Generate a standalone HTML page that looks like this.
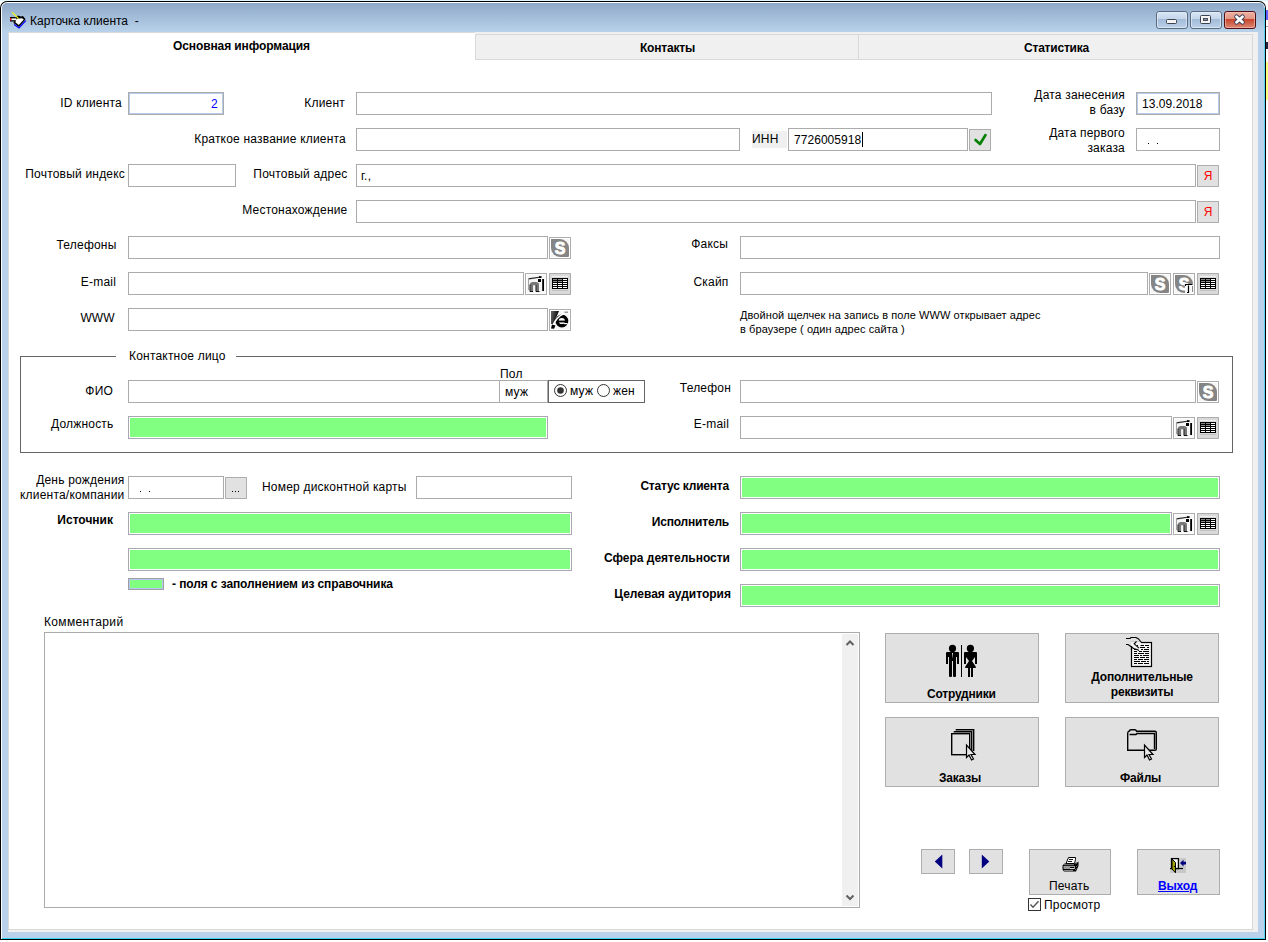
<!DOCTYPE html>
<html><head><meta charset="utf-8">
<style>
*{box-sizing:border-box}
html,body{margin:0;padding:0;width:1268px;height:942px;overflow:hidden;background:#fff;font-family:"Liberation Sans",sans-serif;font-size:12px;color:#000}
.a{position:absolute}
.t{position:absolute;white-space:nowrap;line-height:14px;font-size:12px;letter-spacing:0.2px}
.r{text-align:right}
.b{font-weight:bold;letter-spacing:-0.2px}
.in{position:absolute;border:1px solid #ababab;background:#fff;height:23px}
.gr{position:absolute;border:1px solid #a8a8b0;background:#80ff80;height:23px;box-shadow:inset 0 0 0 1px #fff}
.sb{position:absolute;border:1px solid #adadad;background:#e1e1e1;width:22px;height:22px}
.bb{position:absolute;border:1px solid #adadad;background:#e1e1e1}
</style></head><body>

<svg width="0" height="0" style="position:absolute">
<defs>
 <symbol id="bx" viewBox="0 0 22 22"><rect x="0.5" y="0.5" width="21" height="21" fill="#e1e1e1" stroke="#adadad"/></symbol>
 <symbol id="bxl" viewBox="0 0 22 22"><rect x="0.5" y="0.5" width="21" height="21" fill="#f6f6f6" stroke="#adadad"/><rect x="1.5" y="1.5" width="19" height="19" fill="none" stroke="#fff"/></symbol>
 <symbol id="sk" viewBox="0 0 22 22"><use href="#bxl"/>
  <path d="M2,2 H11 A9,9 0 0 1 20,11 V18.8 Q20,20 18.8,20 H11 A9,9 0 0 1 2,11 Z" fill="#858585"/>
  <text x="11" y="16.6" font-family="Liberation Sans" font-size="16" font-weight="bold" fill="#fff" stroke="#fff" stroke-width="0.9" text-anchor="middle">S</text>
 </symbol>
 <symbol id="sk2" viewBox="0 0 22 22"><use href="#bxl"/>
  <path d="M2,2 H11 A9,9 0 0 1 20,11 V18.8 Q20,20 18.8,20 H11 A9,9 0 0 1 2,11 Z" fill="#858585"/>
  <text x="11" y="16.6" font-family="Liberation Sans" font-size="16" font-weight="bold" fill="#fff" stroke="#fff" stroke-width="0.9" text-anchor="middle">S</text>
  <rect x="12" y="11" width="9" height="10" fill="#fafafa"/>
  <rect x="19" y="13" width="1" height="6" fill="#888"/>
  <path d="M12.5,13 V11.5 H19.5 M15.5,12.5 V19.5 H14" fill="none" stroke="#000" stroke-width="1.2"/>
 </symbol>
 <symbol id="ml" viewBox="0 0 22 22"><use href="#bxl"/>
  <path d="M3.5,5.8 L16,4" stroke="#222" stroke-width="1.2"/><rect x="14" y="3.2" width="2.5" height="1.8" fill="#000"/>
  <path d="M3.5,5.5 V17" stroke="#999" stroke-width="0.9"/>
  <rect x="13" y="6" width="3" height="3" fill="#000"/>
  <rect x="17.2" y="6" width="1.8" height="12" fill="#000"/>
  <path d="M6.5,18.6 V11.8 Q6.5,10.6 8,10.6 H11 Q12.4,10.6 12.4,11.8 V18.6" fill="none" stroke="#777" stroke-width="3.2"/>
  <path d="M5,11.5 V18.5 M11,12 V18.5" stroke="#222" stroke-width="1"/>
  <path d="M5,18.5 H8 M11,18.5 H14.5" stroke="#111" stroke-width="1.2"/>
 </symbol>
 <symbol id="gd" viewBox="0 0 22 22"><rect x="0.5" y="0.5" width="21" height="21" fill="#d9d9d9" stroke="#adadad"/>
  <rect x="3" y="3" width="16" height="1" fill="#efefef"/><rect x="3" y="17" width="16" height="1" fill="#c4c4c4"/>
  <rect x="3" y="5" width="16" height="11" fill="#000"/>
  <g fill="#fff"><rect x="14" y="6" width="4" height="1"/><rect x="14" y="8" width="4" height="1"/>
   <rect x="4" y="10" width="4" height="1"/><rect x="9" y="10" width="4" height="1"/><rect x="14" y="10" width="4" height="1"/>
   <rect x="4" y="12" width="4" height="1"/><rect x="9" y="12" width="4" height="1"/><rect x="14" y="12" width="4" height="1"/>
   <rect x="4" y="14" width="4" height="1"/><rect x="9" y="14" width="4" height="1"/><rect x="14" y="14" width="4" height="1"/></g>
  <g fill="#8a8a8a"><rect x="4" y="6" width="4" height="1"/><rect x="9" y="6" width="4" height="1"/><rect x="4" y="8" width="4" height="1"/><rect x="9" y="8" width="4" height="1"/></g>
 </symbol>
 <symbol id="ie" viewBox="0 0 22 22"><use href="#bxl"/>
  <defs><linearGradient id="ieg" x1="0" y1="0" x2="1" y2="0.3"><stop offset="0" stop-color="#6a6a6a"/><stop offset="1" stop-color="#000"/></linearGradient></defs>
  <path d="M2,2 H10 L4.5,15 H2 Z" fill="url(#ieg)"/>
  <circle cx="12.8" cy="12" r="4.8" fill="none" stroke="#000" stroke-width="3.4"/>
  <rect x="8.5" y="11.6" width="9.5" height="1.8" fill="#000"/>
  <path d="M14.8,14.6 H18.5" stroke="#fff" stroke-width="1.2"/>
  <path d="M2.5,19.5 C5,13 9,6.5 15.5,4.5" fill="none" stroke="#fff" stroke-width="1.5"/>
  <path d="M2,19.5 L3,15.5 L6.5,16.5 L5,19.8 Z" fill="#000"/>
  <rect x="15.5" y="2.5" width="3.5" height="1.5" fill="#9a9a9a"/>
 </symbol>
 <symbol id="ya" viewBox="0 0 22 22"><use href="#bx"/>
  <text x="11" y="15" font-family="Liberation Sans" font-size="12" fill="#ff0000" text-anchor="middle">Я</text>
 </symbol>
 <symbol id="ck" viewBox="0 0 22 22"><use href="#bx"/>
  <path d="M6.5,11 L11,15 L16.5,6" fill="none" stroke="#008000" stroke-width="2.6" stroke-linejoin="round" stroke-linecap="round"/>
 </symbol>
 <symbol id="dt" viewBox="0 0 22 22"><use href="#bx"/>
  <g fill="#000"><rect x="7" y="14" width="1" height="1"/><rect x="10" y="14" width="1" height="1"/><rect x="13" y="14" width="1" height="1"/></g>
 </symbol>
</defs></svg>
<!-- window frame -->
<div class="a" style="left:0;top:0;width:1268px;height:1px;background:#e0f4fc"></div>
<div class="a" style="left:0;top:1px;width:1266px;height:939px;background:#000;border-radius:7px 7px 0 0"></div>
<div class="a" style="left:1px;top:2px;width:1264px;height:937px;background:#fff;border-radius:6px 6px 0 0"></div>
<div class="a" style="left:2px;top:3px;width:1263px;height:935px;background:#b9d1ea;border-radius:5px 5px 0 0"></div>
<div class="a" style="left:2px;top:3px;width:1262px;height:29px;background:linear-gradient(#8ea9c8,#b9d2ea);border-radius:5px 5px 0 0"></div>
<div class="a" style="left:2px;top:938px;width:1263px;height:1px;background:#38d6f4"></div>
<div class="a" style="left:1264px;top:8px;width:1px;height:931px;background:#5fd4f2"></div><div class="a" style="left:1266px;top:10px;width:2px;height:10px;background:#6060ff"></div><div class="a" style="left:1266px;top:26px;width:2px;height:1px;background:#a0a0a0"></div><div class="a" style="left:1266px;top:42px;width:2px;height:7px;background:#202040"></div><div class="a" style="left:1266px;top:62px;width:2px;height:38px;background:#ffff80"></div>
<!-- content -->
<div class="a" style="left:8px;top:32px;width:1250px;height:900px;background:#f0f0f0"></div>
<div class="a" style="left:8px;top:32px;width:1245px;height:898px;background:#fff;border-left:1px solid #d9d9d9;border-top:1px solid #d9d9d9;border-right:1px solid #d9d9d9;border-bottom:1px solid #d9d9d9"></div>

<!-- title -->
<svg class="a" style="left:0;top:0" width="1268" height="34">
 <defs>
  <linearGradient id="gb" x1="0" y1="0" x2="0" y2="1">
   <stop offset="0" stop-color="#dbe7f5"/><stop offset="0.45" stop-color="#c3d5ea"/><stop offset="0.46" stop-color="#a3bbd8"/><stop offset="1" stop-color="#bcd2ea"/>
  </linearGradient>
  <linearGradient id="gr" x1="0" y1="0" x2="0" y2="1">
   <stop offset="0" stop-color="#eeb3a6"/><stop offset="0.45" stop-color="#e29483"/><stop offset="0.46" stop-color="#c8442b"/><stop offset="1" stop-color="#dd8a76"/>
  </linearGradient>
 </defs>
 <rect x="1156.5" y="11.5" width="31" height="17" rx="2.5" fill="url(#gb)" stroke="#5a6a80"/>
 <rect x="1157.5" y="12.5" width="29" height="15" rx="2" fill="none" stroke="#e6eef8" stroke-opacity="0.7"/>
 <rect x="1166.5" y="19.5" width="10" height="4" rx="1" fill="#f4f4f4" stroke="#3c4250"/>
 <rect x="1190.5" y="11.5" width="31" height="17" rx="2.5" fill="url(#gb)" stroke="#5a6a80"/>
 <rect x="1191.5" y="12.5" width="29" height="15" rx="2" fill="none" stroke="#e6eef8" stroke-opacity="0.7"/>
 <rect x="1200.5" y="15.5" width="10" height="8" rx="1" fill="#f4f4f4" stroke="#3c4250"/>
 <rect x="1203.5" y="18.5" width="4" height="2" fill="#8a96a8" stroke="#3c4250" stroke-width="0.9"/>
 <rect x="1224.5" y="11.5" width="31" height="17" rx="2.5" fill="url(#gr)" stroke="#4e0e12"/>
 <rect x="1225.5" y="12.5" width="29" height="15" rx="2" fill="none" stroke="#f6c8bc" stroke-opacity="0.6"/>
 <path d="M1236.5 16.8 L1242.5 22.2 M1242.5 16.8 L1236.5 22.2" stroke="#3a3f55" stroke-width="4.6" stroke-linecap="round"/>
 <path d="M1236.5 16.8 L1242.5 22.2 M1242.5 16.8 L1236.5 22.2" stroke="#fff" stroke-width="2.8" stroke-linecap="round"/>
 <!-- app icon -->
 <path d="M13.5,23 L15.2,17.6 L17.8,15.6 L21,16.6 L23,16 L25.6,19.2 L19,27 Z" fill="#000"/>
 <path d="M15.3,22.3 L16.5,18.8 L22,18.2 L23.8,19.5 L18.8,24.9 Z" fill="#fff"/>
 <path d="M14.2,24.6 L19,27.9 L25.8,20.6" fill="none" stroke="#0000ff" stroke-width="1.2"/>
 <rect x="10" y="17" width="5" height="4.5" fill="#000"/>
 <rect x="10" y="18" width="1.2" height="2.6" fill="#ff0000"/>
 <rect x="11.4" y="18.4" width="4.8" height="1.8" fill="#fff"/>
 <path d="M12.2,12.4 L18.6,18.6" stroke="#ffff00" stroke-width="1.2"/>
</svg>
<div class="t" style="left:30px;top:14px;color:#000;letter-spacing:0">Карточка клиента&nbsp; -</div>

<!-- tabs -->
<div class="a" style="left:475px;top:32px;width:778px;height:28px;background:#f0f0f0"></div>
<div class="a" style="left:475px;top:34px;width:384px;height:26px;border:1px solid #d9d9d9;background:#f0f0f0"></div>
<div class="a" style="left:858px;top:34px;width:395px;height:26px;border:1px solid #d9d9d9;background:#f0f0f0"></div>
<div class="t b" style="left:173px;top:39px;letter-spacing:-0.1px">Основная информация</div>
<div class="t b" style="left:640px;top:41px">Контакты</div>
<div class="t b" style="left:1024px;top:41px">Статистика</div>

<!-- row 1 -->
<div class="t r" style="left:0;width:122px;top:96px">ID клиента</div>
<div class="in" style="left:128px;top:92px;width:96px;box-shadow:inset 0 0 0 1px #b5cdea"></div>
<div class="t" style="left:211px;top:97px;color:#0000ff">2</div>
<div class="t r" style="left:200px;width:145px;top:96px">Клиент</div>
<div class="in" style="left:356px;top:92px;width:636px"></div>
<div class="t r" style="left:900px;width:225px;top:88px">Дата занесения</div><div class="t r" style="left:900px;width:225px;top:103px">в базу</div>
<div class="in" style="left:1136px;top:92px;width:84px;box-shadow:inset 0 0 0 1px #b5cdea"></div>
<div class="t" style="left:1142px;top:97px;letter-spacing:0.05px">13.09.2018</div>

<!-- row 2 -->
<div class="t r" style="left:100px;width:246px;top:132px">Краткое название клиента</div>
<div class="in" style="left:356px;top:128px;width:384px"></div>
<div class="a" style="left:752px;top:131px;width:35px;height:17px;background:#f0f0f0"></div>
<div class="t" style="left:752px;top:132px">ИНН</div>
<div class="in" style="left:788px;top:128px;width:180px"></div>
<div class="t" style="left:794px;top:133px;letter-spacing:0.05px">7726005918</div>
<div class="a" style="left:862px;top:132px;width:1px;height:15px;background:#000"></div>
<svg class="a" style="left:969px;top:129px" width="22" height="22"><use href="#ck"/></svg>
<div class="t r" style="left:900px;width:225px;top:126px">Дата первого</div><div class="t r" style="left:900px;width:225px;top:141px">заказа</div>
<div class="in" style="left:1136px;top:128px;width:84px"></div>
<div class="a" style="left:1148px;top:143px;width:1px;height:1px;background:#000"></div><div class="a" style="left:1157px;top:143px;width:1px;height:1px;background:#000"></div>

<!-- row 3 -->
<div class="t r" style="left:0;width:125px;top:167px">Почтовый индекс</div>
<div class="in" style="left:128px;top:164px;width:108px"></div>
<div class="t r" style="left:200px;width:147.5px;top:167px">Почтовый адрес</div>
<div class="in" style="left:356px;top:164px;width:840px"></div>
<div class="t" style="left:361px;top:169px">г.,</div>
<svg class="a" style="left:1197px;top:165px" width="22" height="22"><use href="#ya"/></svg>

<!-- row 4 -->
<div class="t r" style="left:200px;width:147.5px;top:203px">Местонахождение</div>
<div class="in" style="left:356px;top:200px;width:840px"></div>
<svg class="a" style="left:1197px;top:201px" width="22" height="22"><use href="#ya"/></svg>

<!-- row 5 -->
<div class="t r" style="left:0;width:116.5px;top:238px">Телефоны</div>
<div class="in" style="left:128px;top:236px;width:420px"></div>
<svg class="a" style="left:549px;top:237px" width="22" height="22"><use href="#sk"/></svg>
<div class="t r" style="left:600px;width:128px;top:237px">Факсы</div>
<div class="in" style="left:740px;top:236px;width:480px"></div>

<!-- row 6 -->
<div class="t r" style="left:0;width:116px;top:275px">E-mail</div>
<div class="in" style="left:128px;top:272px;width:396px"></div>
<svg class="a" style="left:525px;top:273px" width="22" height="22"><use href="#ml"/></svg>
<svg class="a" style="left:549px;top:273px" width="22" height="22"><use href="#gd"/></svg>
<div class="t r" style="left:600px;width:128.5px;top:275px">Скайп</div>
<div class="in" style="left:740px;top:272px;width:408px"></div>
<svg class="a" style="left:1149px;top:273px" width="22" height="22"><use href="#sk"/></svg>
<svg class="a" style="left:1173px;top:273px" width="22" height="22"><use href="#sk2"/></svg>
<svg class="a" style="left:1197px;top:273px" width="22" height="22"><use href="#gd"/></svg>

<!-- row 7 -->
<div class="t r" style="left:0;width:114.5px;top:311px;letter-spacing:0">WWW</div>
<div class="in" style="left:128px;top:308px;width:420px"></div>
<svg class="a" style="left:549px;top:309px" width="22" height="22"><use href="#ie"/></svg>
<div class="t" style="left:740px;top:308px;font-size:11px;letter-spacing:0.08px">Двойной щелчек на запись в поле WWW открывает адрес<br>в браузере ( один адрес сайта )</div>

<!-- group box -->
<div class="a" style="left:20px;top:356px;width:1213px;height:97px;border:1px solid #646464"></div>
<div class="a" style="left:116px;top:352px;width:120px;height:8px;background:#fff"></div>
<div class="t" style="left:129px;top:349px">Контактное лицо</div>

<div class="t r" style="left:0;width:113px;top:384px">ФИО</div>
<div class="in" style="left:128px;top:380px;width:372px"></div>
<div class="t" style="left:500px;top:367px">Пол</div>
<div class="in" style="left:499px;top:380px;width:49px"></div>
<div class="t" style="left:505px;top:385px">муж</div>
<div class="a" style="left:548px;top:380px;width:97px;height:23px;border:1px solid #646464;background:#fff"></div>
<div class="t" style="left:570px;top:384px">муж</div>
<div class="t" style="left:613px;top:384px">жен</div>
<div class="t r" style="left:600px;width:131px;top:381px">Телефон</div>
<div class="in" style="left:740px;top:380px;width:456px"></div>
<svg class="a" style="left:1197px;top:381px" width="22" height="22"><use href="#sk"/></svg>

<div class="t r" style="left:0;width:113.5px;top:417px">Должность</div>
<div class="gr" style="left:128px;top:416px;width:420px"></div>
<div class="t r" style="left:600px;width:129px;top:417px">E-mail</div>
<div class="in" style="left:740px;top:416px;width:432px"></div>
<svg class="a" style="left:1173px;top:417px" width="22" height="22"><use href="#ml"/></svg>
<svg class="a" style="left:1197px;top:417px" width="22" height="22"><use href="#gd"/></svg>

<!-- lower section -->
<div class="t r" style="left:0;width:124.5px;top:473px">День рождения</div><div class="t r" style="left:0;width:124.5px;top:488px">клиента/компании</div>
<div class="in" style="left:128px;top:476px;width:96px"></div>
<div class="a" style="left:140px;top:491px;width:1px;height:1px;background:#000"></div><div class="a" style="left:149px;top:491px;width:1px;height:1px;background:#000"></div>
<svg class="a" style="left:225px;top:477px" width="22" height="22"><use href="#dt"/></svg>
<div class="t" style="left:262px;top:480px">Номер дисконтной карты</div>
<div class="in" style="left:416px;top:476px;width:156px"></div>
<div class="t r b" style="left:600px;width:129px;top:479px">Статус клиента</div>
<div class="gr" style="left:740px;top:476px;width:480px"></div>

<div class="t r b" style="left:0;width:113px;top:513px;letter-spacing:0px">Источник</div>
<div class="gr" style="left:128px;top:512px;width:444px"></div>
<div class="t r b" style="left:600px;width:129px;top:515px">Исполнитель</div>
<div class="gr" style="left:740px;top:512px;width:432px"></div>
<svg class="a" style="left:1173px;top:513px" width="22" height="22"><use href="#ml"/></svg>
<svg class="a" style="left:1197px;top:513px" width="22" height="22"><use href="#gd"/></svg>

<div class="gr" style="left:128px;top:548px;width:444px"></div>
<div class="t r b" style="left:600px;width:130px;top:551px;letter-spacing:0px">Сфера деятельности</div>
<div class="gr" style="left:740px;top:548px;width:480px"></div>

<div class="a" style="left:128px;top:578px;width:36px;height:12px;border:1px solid #a0a0a4;background:#80ff80;box-shadow:inset 0 0 0 1px #b4c6f2"></div>
<div class="t b" style="left:172px;top:577px;letter-spacing:-0.1px">- поля с заполнением из справочника</div>
<div class="t r b" style="left:600px;width:131px;top:587px;letter-spacing:0px">Целевая аудитория</div>
<div class="gr" style="left:740px;top:584px;width:480px"></div>

<!-- comment -->
<div class="t" style="left:44px;top:615px;letter-spacing:0.35px">Комментарий</div>
<div class="a" style="left:44px;top:632px;width:816px;height:276px;border:1px solid #ababab;background:#fff"></div>
<div class="a" style="left:842px;top:634px;width:16px;height:272px;background:#f0f0f0"></div>

<!-- big buttons -->
<div class="bb" style="left:885px;top:633px;width:154px;height:70px"></div>
<div class="t b" style="left:927px;top:687px">Сотрудники</div>
<div class="bb" style="left:1065px;top:633px;width:154px;height:70px"></div>
<div class="t b" style="left:1065px;width:154px;text-align:center;top:670px;line-height:15px">Дополнительные<br>реквизиты</div>
<div class="bb" style="left:885px;top:717px;width:154px;height:70px"></div>
<div class="t b" style="left:939px;top:771px">Заказы</div>
<div class="bb" style="left:1065px;top:717px;width:154px;height:70px"></div>
<div class="t b" style="left:1120px;top:771px">Файлы</div>

<!-- nav -->
<div class="bb" style="left:921px;top:849px;width:34px;height:25px"></div>
<div class="bb" style="left:969px;top:849px;width:34px;height:25px"></div>
<div class="bb" style="left:1029px;top:849px;width:82px;height:46px"></div>
<div class="t" style="left:1049px;top:879px">Печать</div>
<div class="bb" style="left:1137px;top:849px;width:83px;height:46px"></div>
<div class="t b" style="left:1158px;top:879px;color:#0000ff;text-decoration:underline">Выход</div>
<div class="a" style="left:1028px;top:898px;width:13px;height:13px;border:1px solid #333;background:#fff"></div>
<div class="t" style="left:1044px;top:898px">Просмотр</div>


<!-- big button icons -->
<svg class="a" style="left:940px;top:640px" width="44" height="42">
 <g fill="#000" transform="translate(-940,-640)">
  <circle cx="952.5" cy="648.4" r="3.6"/>
  <path d="M946,653 Q946,652 947,652 H958 Q959,652 959,653 V664 H957 V657 H956 V661 H949 V657 H948 V664 H946 Z"/>
  <rect x="949" y="660" width="3" height="17" rx="1"/>
  <rect x="953" y="660" width="3" height="17" rx="1"/>
  <path d="M952,653 L952.5,659 L953,653 Z" fill="#e1e1e1"/>
  <rect x="961" y="645" width="1" height="32"/>
  <circle cx="970.4" cy="648.4" r="3.6"/>
  <path d="M964,653 Q964,652 965,652 H976 Q977,652 977,653 V664 H975 V657 L972,661 L976,667 Q976,668 975,668 H966 Q965,668 965,667 L969,661 L966,657 V664 H964 Z"/>
  <rect x="968" y="667" width="2" height="10"/>
  <rect x="971" y="667" width="2" height="10"/>
 </g>
</svg>
<svg class="a" style="left:1120px;top:632px" width="40" height="40">
 <g transform="translate(-1120,-632)">
  <rect x="1131.5" y="642.5" width="20" height="24" fill="#f4f4f4" stroke="#000" stroke-width="1.2"/>
  <g stroke="#000" stroke-width="1">
   <path d="M1134 645.5 H1138 M1139 645.5 H1144 M1145 645.5 H1149"/>
   <path d="M1134 647.5 H1137 M1140 647.5 H1145 M1147 647.5 H1149"/>
   <path d="M1134 649.5 H1139 M1141 649.5 H1143 M1144 649.5 H1149"/>
   <path d="M1134 651.5 H1137 M1139 651.5 H1142 M1143 651.5 H1149"/>
   <path d="M1134 653.5 H1137 M1138 653.5 H1144 M1145 653.5 H1149"/>
   <path d="M1134 655.5 H1139 M1140 655.5 H1142 M1143 655.5 H1149"/>
   <path d="M1134 657.5 H1139 M1140 657.5 H1145 M1146 657.5 H1149"/>
   <path d="M1134 659.5 H1137 M1138 659.5 H1143 M1144 659.5 H1149"/>
   <path d="M1134 661.5 H1140 M1141 661.5 H1146 M1147 661.5 H1149"/>
   <path d="M1134 663.5 H1137 M1138 663.5 H1143 M1144 663.5 H1149"/>
  </g>
  <path d="M1130.5 642 H1141 L1140 650.5 L1133 648.5 L1130.5 646.5 Z" fill="#f4f4f4"/>
  <path d="M1131.5 650 V646" fill="none" stroke="#000" stroke-width="1.2"/>
  <path d="M1126 638.5 H1130 L1131 637.5 H1136 L1138.5 639 L1141.5 642.5" fill="none" stroke="#000" stroke-width="1.1"/>
  <path d="M1126 644.5 H1128 L1131 646.5 L1133.5 648.5 L1137 649.5 L1139 650.5" fill="none" stroke="#000" stroke-width="1.1"/>
  <path d="M1136.5 641.5 L1134.2 643.8 L1139 648.2" fill="none" stroke="#000" stroke-width="1.1"/>
  <path d="M1137 645.5 H1138 M1141 645.5 H1144 M1145 645.5 H1149" stroke="#000"/>
  <path d="M1140 647.5 H1145 M1147 647.5 H1149" stroke="#000"/>
  <path d="M1134 649.5 H1136 M1141 649.5 H1143 M1144 649.5 H1149" stroke="#000"/>
 </g>
</svg>
<svg class="a" style="left:944px;top:722px" width="40" height="40">
 <g transform="translate(-944,-722)" fill="none" stroke="#000" stroke-width="1.4">
  <path d="M955.7 729.7 H973.7 V751"/>
  <path d="M953.7 731.7 H971.7 V752"/>
  <rect x="951.7" y="733.7" width="18" height="21" fill="#e1e1e1"/>
  <path d="M966.5 745 V757.5 L969 755 L971.5 760 L973.5 759 L971 754.5 H975 Z" fill="#e8e8e8" stroke-width="1.2" stroke-linejoin="miter"/>
 </g>
</svg>
<svg class="a" style="left:1122px;top:722px" width="40" height="40">
 <g transform="translate(-1122,-722)" fill="none" stroke="#000" stroke-width="1.4">
  <path d="M1127.7 750.3 V733 Q1128 731 1129.5 731 V730.5 Q1130 729.7 1131 729.7 H1135 Q1136 729.7 1136.5 731.3 H1155 Q1156.3 731.3 1156.3 733 V749 Q1156.3 750.3 1155 750.3 Z" fill="#e1e1e1"/>
  <path d="M1129.5 734.5 H1136 L1137 733.5 H1154.5 V749"/>
  <path d="M1144.5 745 V757.5 L1147 755 L1149.5 760 L1151.5 759 L1149 754.5 H1153 Z" fill="#e8e8e8" stroke-width="1.2"/>
 </g>
</svg>
<!-- nav arrows -->
<svg class="a" style="left:921px;top:849px" width="90" height="26">
 <path d="M13.8 12.4 L21.3 5.4 V19.4 Z" fill="#000080"/>
 <path d="M60.8 5.4 V19.4 L68.3 12.4 Z" fill="#000080"/>
</svg>
<!-- printer -->
<svg class="a" style="left:1058px;top:852px" width="26" height="24">
 <g transform="translate(-1058,-852)">
  <path d="M1068.5 857.5 H1075.5 V859.5 L1074.5 863.5 H1066 Z" fill="#fff" stroke="#000" stroke-width="1"/>
  <path d="M1069 859.5 H1073 M1068 861.5 H1072" stroke="#000" stroke-width="0.9"/>
  <path d="M1064.5 863.5 H1075 L1078.5 861.5 V866 L1076 871.5 H1064 L1062.5 869.5 V865.5 Z" fill="#000"/>
  <rect x="1064" y="864.3" width="10" height="0.9" fill="#999"/>
  <rect x="1063.5" y="866" width="11.5" height="3" fill="#9a9a9a"/>
  <rect x="1070" y="867" width="4" height="1.2" fill="#000"/>
  <rect x="1070" y="868.3" width="4" height="0.8" fill="#fff"/>
  <rect x="1064" y="870" width="9" height="0.9" fill="#999"/>
  <path d="M1075.5 864 L1077.5 862.5 M1076 867 L1077.5 865.5 M1075 870 L1076.5 868.5" stroke="#888" stroke-width="0.8"/>
 </g>
</svg>
<!-- door -->
<svg class="a" style="left:1166px;top:854px" width="24" height="22">
 <g transform="translate(-1166,-854)">
  <rect x="1170" y="858" width="16" height="15" fill="#c8c8c8"/>
  <rect x="1171.6" y="858.6" width="6.8" height="10" fill="#fff" stroke="#000" stroke-width="1.3"/>
  <path d="M1170 868.5 H1183" stroke="#000" stroke-width="1.2"/>
  <path d="M1172 859 L1175.5 862.5 V872.8 L1172 869 Z" fill="#a0a000" stroke="#000" stroke-width="1"/>
  <rect x="1174" y="866" width="1" height="1" fill="#000"/>
  <path d="M1180 863 L1183.5 859.8 V861.8 H1186 V864.5 H1183.5 V866.5 Z" fill="#000080"/>
 </g>
</svg>
<!-- checkbox check -->
<svg class="a" style="left:1028px;top:898px" width="13" height="13">
 <path d="M2.5 6.5 L5 9.2 L10.5 3.2" fill="none" stroke="#555" stroke-width="1.4"/>
</svg>
<!-- radios -->
<svg class="a" style="left:550px;top:380px" width="70" height="22">
 <circle cx="10.5" cy="10.5" r="6" fill="#fff" stroke="#333" stroke-width="1"/>
 <circle cx="10.5" cy="10.5" r="3.3" fill="#333"/>
 <circle cx="53.5" cy="10.5" r="6" fill="#fff" stroke="#333" stroke-width="1"/>
</svg>
<!-- scrollbar chevrons -->
<svg class="a" style="left:842px;top:634px" width="16" height="272">
 <path d="M4.5 11 L8 7.5 L11.5 11" fill="none" stroke="#606060" stroke-width="2"/>
 <path d="M4.5 261.5 L8 265 L11.5 261.5" fill="none" stroke="#606060" stroke-width="2"/>
</svg>
</body></html>
